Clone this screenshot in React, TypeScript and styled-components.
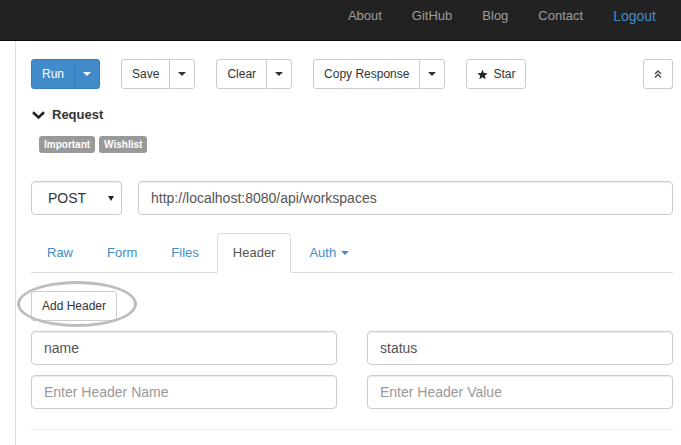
import styled, { createGlobalStyle, css } from "styled-components";

const GlobalStyle = createGlobalStyle`
  html, body {
    margin: 0;
    background: #fff;
  }
  body {
    font-family: "Liberation Sans", Arial, sans-serif;
    color: #333;
  }
  * {
    box-sizing: border-box;
  }
`;

const Navbar = styled.nav`
  display: flex;
  justify-content: flex-end;
  height: 41px;
  padding-right: 10px;
  background: #222;
  border-bottom: 1px solid #080808;
`;

const NavLink = styled.a<{ $active?: boolean }>`
  padding: 6px 15px 0;
  font-size: 13px;
  line-height: 20px;
  color: ${(p) => (p.$active ? "#428bca" : "#9d9d9d")};
  text-decoration: none;
  ${(p) =>
    p.$active &&
    css`
      font-size: 14px;
    `}
`;

const Main = styled.div`
  padding: 0 8px 0 15px;
`;

const Panel = styled.div`
  min-height: calc(100vh - 41px);
  padding: 18px 0 0 15px;
  border-left: 1px solid #ddd;
`;

const Toolbar = styled.div`
  display: flex;
  align-items: center;
  gap: 21px;
`;

const BtnGroup = styled.div`
  display: flex;

  & > button + button {
    margin-left: -1px;
  }
  & > button:not(:last-child) {
    border-top-right-radius: 0;
    border-bottom-right-radius: 0;
  }
  & > button:not(:first-child) {
    border-top-left-radius: 0;
    border-bottom-left-radius: 0;
  }
`;

const Btn = styled.button<{ $primary?: boolean; $toggle?: boolean }>`
  display: inline-flex;
  align-items: center;
  justify-content: center;
  gap: 5px;
  height: 30px;
  padding: 0 ${(p) => (p.$toggle ? "8px" : "10px")};
  font-family: inherit;
  font-size: 12px;
  color: ${(p) => (p.$primary ? "#fff" : "#333")};
  background: ${(p) => (p.$primary ? "#428bca" : "#fff")};
  border: 1px solid ${(p) => (p.$primary ? "#357ebd" : "#ccc")};
  border-radius: 3px;
  cursor: pointer;
`;

const ScrollTop = styled(Btn)`
  width: 30px;
  margin-left: auto;
  padding: 0;
`;

const Caret = styled.span<{ $color?: string }>`
  display: inline-block;
  width: 0;
  height: 0;
  border-top: 4px solid ${(p) => p.$color ?? "#333"};
  border-left: 4px solid transparent;
  border-right: 4px solid transparent;
`;

const SectionTitle = styled.div`
  display: flex;
  align-items: center;
  gap: 7px;
  margin-top: 16px;
  padding-left: 1px;
  font-size: 13px;
  font-weight: bold;
  line-height: 20px;
`;

const Tags = styled.div`
  display: flex;
  gap: 4px;
  margin-top: 11px;
  padding-left: 8px;
`;

const Tag = styled.span`
  height: 17px;
  padding: 0 5px;
  font-size: 10px;
  font-weight: bold;
  line-height: 17px;
  color: #fff;
  background: #999;
  border-radius: 3px;
`;

const RequestLine = styled.div`
  display: flex;
  gap: 16px;
  margin-top: 28px;
`;

const fieldStyles = css`
  height: 34px;
  padding: 6px 12px;
  font-family: "Liberation Sans", Arial, sans-serif;
  font-size: 14px;
  color: #555;
  background: #fff;
  border: 1px solid #ccc;
  border-radius: 4px;
  box-shadow: inset 0 1px 1px rgba(0, 0, 0, 0.075);
`;

const MethodSelect = styled.div`
  ${fieldStyles};
  display: flex;
  flex: 0 0 91px;
  align-items: center;
  justify-content: space-between;
  padding: 0 7px 0 16px;
  color: #333;
`;

const SelectArrow = styled.span`
  width: 0;
  height: 0;
  border-top: 5px solid #222;
  border-left: 3px solid transparent;
  border-right: 3px solid transparent;
`;

const Field = styled.input`
  ${fieldStyles};
  flex: 1;
  width: 100%;
  min-width: 0;

  &::placeholder {
    color: #999;
  }
`;

const Tabs = styled.ul`
  display: flex;
  margin: 18px 0 0;
  padding: 0;
  list-style: none;
  border-bottom: 1px solid #ddd;
`;

const Tab = styled.li<{ $active?: boolean }>`
  display: flex;
  align-items: center;
  gap: 5px;
  margin: 0 2px -1px 0;
  padding: 10px 15px;
  font-size: 13px;
  line-height: 18px;
  color: ${(p) => (p.$active ? "#555" : "#428bca")};
  background: ${(p) => (p.$active ? "#fff" : "transparent")};
  border: 1px solid ${(p) => (p.$active ? "#ddd" : "transparent")};
  border-bottom-color: transparent;
  border-radius: 4px 4px 0 0;
`;

const AddHeaderWrap = styled.div`
  position: relative;
  display: inline-block;
  margin-top: 18px;
`;

// the grey ring drawn over the screenshot to point at the button
const Highlight = styled.span`
  position: absolute;
  left: -14px;
  top: -10px;
  width: 120px;
  height: 46px;
  border: 3px solid #bdbdbd;
  border-radius: 50%;
  pointer-events: none;
`;

const HeaderGrid = styled.div`
  display: grid;
  grid-template-columns: 1fr 1fr;
  column-gap: 30px;
  row-gap: 10px;
  margin-top: 10px;
`;

const Divider = styled.hr`
  margin: 20px 0 0;
  border: 0;
  border-top: 1px solid #eee;
`;

function ChevronDown() {
  return (
    <svg width="13" height="8" viewBox="0 0 13 8">
      <path d="M1 1.2 L6.5 6.4 L12 1.2" fill="none" stroke="#222" strokeWidth="2.6" />
    </svg>
  );
}

function StarIcon() {
  return (
    <svg width="11" height="11" viewBox="0 0 24 24">
      <path
        d="M12 1.5l3.1 7.2 7.9.6-6 5.2 1.9 7.8L12 18.1l-6.9 4.2 1.9-7.8-6-5.2 7.9-.6z"
        fill="#222"
      />
    </svg>
  );
}

function DoubleUp() {
  return (
    <svg width="8" height="8" viewBox="0 0 8 8">
      <path
        d="M1 4 L4 1 L7 4 M1 7.5 L4 4.5 L7 7.5"
        fill="none"
        stroke="#444"
        strokeWidth="1.3"
      />
    </svg>
  );
}

const navItems = ["About", "GitHub", "Blog", "Contact"];
const tools = ["Save", "Clear", "Copy Response"];

export default function App() {
  return (
    <>
      <GlobalStyle />
      <Navbar>
        {navItems.map((n) => (
          <NavLink key={n} href="#">
            {n}
          </NavLink>
        ))}
        <NavLink href="#" $active>
          Logout
        </NavLink>
      </Navbar>
      <Main>
        <Panel>
          <Toolbar>
            <BtnGroup>
              <Btn $primary>Run</Btn>
              <Btn $primary $toggle>
                <Caret $color="#fff" />
              </Btn>
            </BtnGroup>
            {tools.map((t) => (
              <BtnGroup key={t}>
                <Btn>{t}</Btn>
                <Btn $toggle>
                  <Caret />
                </Btn>
              </BtnGroup>
            ))}
            <Btn>
              <StarIcon />
              Star
            </Btn>
            <ScrollTop>
              <DoubleUp />
            </ScrollTop>
          </Toolbar>

          <SectionTitle>
            <ChevronDown />
            Request
          </SectionTitle>
          <Tags>
            <Tag>Important</Tag>
            <Tag>Wishlist</Tag>
          </Tags>

          <RequestLine>
            <MethodSelect>
              POST
              <SelectArrow />
            </MethodSelect>
            <Field defaultValue="http://localhost:8080/api/workspaces" />
          </RequestLine>

          <Tabs>
            <Tab>Raw</Tab>
            <Tab>Form</Tab>
            <Tab>Files</Tab>
            <Tab $active>Header</Tab>
            <Tab>
              Auth
              <Caret $color="#428bca" />
            </Tab>
          </Tabs>

          <AddHeaderWrap>
            <Btn>Add Header</Btn>
            <Highlight />
          </AddHeaderWrap>

          <HeaderGrid>
            <Field defaultValue="name" />
            <Field defaultValue="status" />
            <Field placeholder="Enter Header Name" />
            <Field placeholder="Enter Header Value" />
          </HeaderGrid>
          <Divider />
        </Panel>
      </Main>
    </>
  );
}
